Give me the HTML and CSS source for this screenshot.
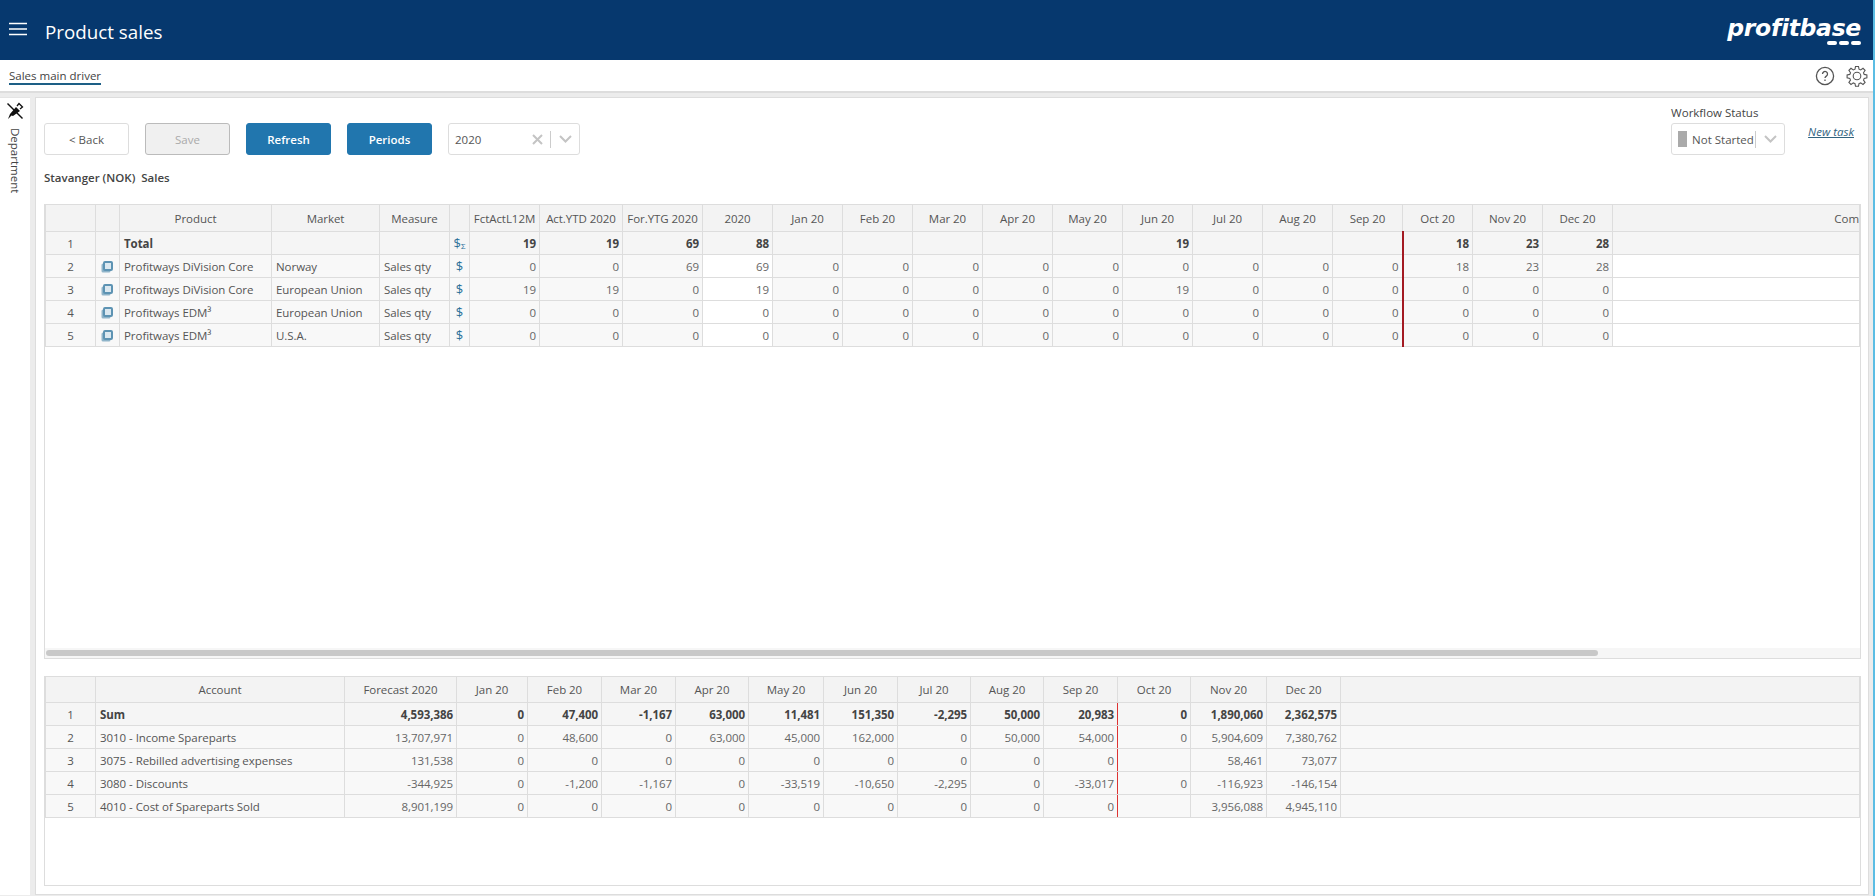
FILE: index.html
```html
<!DOCTYPE html>
<html lang="en">
<head>
    <meta charset="UTF-8">
    <title>Product sales</title>
    <link rel="stylesheet" href="styles.css">
</head>
<body>
    <header class="topbar">
        <svg class="menu-icon" width="18" height="14" viewBox="0 0 18 14"><path d="M0 1.500h18M0 7h18M0 12.500h18" stroke="#fff" stroke-width="1.500" fill="none"/></svg>
        <h1 class="page-title">Product sales</h1>
        <div class="logo">
            <span class="logo-text">profitbase</span>
            <span class="logo-dashes"><i></i><i></i><i></i></span>
        </div>
    </header>
    <nav class="subbar">
        <a class="tab-link">Sales main driver</a>
        <div class="subbar-icons">
            <svg width="20" height="20" viewBox="0 0 20 20" fill="none" stroke="#555" stroke-width="1.300"><circle cx="10" cy="10" r="8.600"/><path d="M7.500 8a2.500 2.500 0 1 1 3.800 2.100c-.9.600-1.300 1-1.300 2"/><path d="M10 13.600v1.400"/></svg>
            <svg width="22" height="22" viewBox="0 0 22 22" fill="none" stroke="#555" stroke-width="1.100"><path d="M9.500 1.500h3l.5 2.700 1.700.7 2.300-1.600 2.100 2.100-1.600 2.300.7 1.700 2.700.5v3l-2.700.5-.7 1.700 1.600 2.300-2.100 2.100-2.300-1.600-1.700.7-.5 2.700h-3l-.5-2.700-1.700-.7-2.300 1.600-2.100-2.100 1.600-2.300-.7-1.700-2.700-.5v-3l2.700-.5.7-1.700-1.600-2.300 2.100-2.100 2.300 1.600 1.700-.7z"/><circle cx="11" cy="11" r="3.800"/></svg>
        </div>
    </nav>
    <div class="workspace">
        <aside class="rail">
            <svg width="18" height="18" viewBox="0 0 18 18"><path d="M2 1l15 15-1 1L1 2z" fill="#111"/><path d="M4 12l6-7 4 4-7 5-1.500-.5L2 17z" fill="#111"/><path d="M11 4l2-2.500 3.500 3.500-2.500 2" fill="none" stroke="#111" stroke-width="1.300"/></svg>
            <span class="rail-label">Department</span>
        </aside>
        <main class="panel">
            <div class="toolbar">
                <button class="btn">&lt; Back</button>
                <button class="btn btn-disabled">Save</button>
                <button class="btn btn-primary">Refresh</button>
                <button class="btn btn-primary">Periods</button>
                <div class="select select-year">
                    <span class="select-value">2020</span>
                    <svg width="11" height="11" viewBox="0 0 11 11"><path d="M1 1l9 9M10 1l-9 9" stroke="#c4c4c4" stroke-width="2" fill="none"/></svg>
                    <span class="select-sep"></span>
                    <svg width="13" height="8" viewBox="0 0 13 8"><path d="M1 1l5.500 5.500L12 1" stroke="#c4c4c4" stroke-width="2" fill="none"/></svg>
                </div>
                <div class="workflow">
                    <label class="workflow-label">Workflow Status</label>
                    <div class="select select-status">
                        <span class="status-swatch"></span>
                        <span class="select-value">Not Started</span>
                        <span class="select-sep"></span>
                        <svg width="13" height="8" viewBox="0 0 13 8"><path d="M1 1l5.500 5.500L12 1" stroke="#c4c4c4" stroke-width="2" fill="none"/></svg>
                    </div>
                </div>
                <a class="new-task">New task</a>
            </div>
            <p class="context">Stavanger (NOK)&nbsp; Sales</p>

            <section class="grid-box grid-box-top">
                <div class="grid-scroll">
                    <table class="grid grid-products">
                        <colgroup>
                            <col class="w-51"><col class="w-24"><col class="w-152"><col class="w-108"><col class="w-70"><col class="w-20">
                            <col class="w-70"><col class="w-83"><col class="w-80"><col class="w-70">
                            <col class="w-70"><col class="w-70"><col class="w-70"><col class="w-70"><col class="w-70"><col class="w-70">
                            <col class="w-70"><col class="w-70"><col class="w-70"><col class="w-70"><col class="w-70"><col class="w-70">
                            <col>
                        </colgroup>
                        <thead>
                            <tr><th></th><th></th><th>Product</th><th>Market</th><th>Measure</th><th></th><th>FctActL12M</th><th>Act.YTD 2020</th><th>For.YTG 2020</th><th>2020</th><th>Jan 20</th><th>Feb 20</th><th>Mar 20</th><th>Apr 20</th><th>May 20</th><th>Jun 20</th><th>Jul 20</th><th>Aug 20</th><th>Sep 20</th><th>Oct 20</th><th>Nov 20</th><th>Dec 20</th><th class="th-clip">Com</th></tr>
                        </thead>
                        <tbody>
                            <tr class="total"><td class="idx">1</td><td></td><td>Total</td><td></td><td></td><td class="sym">$<sub>Σ</sub></td><td class="n">19</td><td class="n">19</td><td class="n">69</td><td class="n">88</td><td></td><td></td><td></td><td></td><td></td><td class="n">19</td><td></td><td></td><td class="now"></td><td class="n">18</td><td class="n">23</td><td class="n">28</td><td></td></tr>
                            <tr><td class="idx">2</td><td class="ico"><span class="copy-icon"></span></td><td>Profitways DiVision Core</td><td>Norway</td><td>Sales qty</td><td class="sym">$</td><td class="n">0</td><td class="n">0</td><td class="n">69</td><td class="n edit">69</td><td class="n">0</td><td class="n">0</td><td class="n">0</td><td class="n">0</td><td class="n">0</td><td class="n">0</td><td class="n">0</td><td class="n">0</td><td class="n now">0</td><td class="n">18</td><td class="n">23</td><td class="n">28</td><td class="edit"></td></tr>
                            <tr><td class="idx">3</td><td class="ico"><span class="copy-icon"></span></td><td>Profitways DiVision Core</td><td>European Union</td><td>Sales qty</td><td class="sym">$</td><td class="n">19</td><td class="n">19</td><td class="n">0</td><td class="n edit">19</td><td class="n">0</td><td class="n">0</td><td class="n">0</td><td class="n">0</td><td class="n">0</td><td class="n">19</td><td class="n">0</td><td class="n">0</td><td class="n now">0</td><td class="n">0</td><td class="n">0</td><td class="n">0</td><td class="edit"></td></tr>
                            <tr><td class="idx">4</td><td class="ico"><span class="copy-icon"></span></td><td>Profitways EDM³</td><td>European Union</td><td>Sales qty</td><td class="sym">$</td><td class="n">0</td><td class="n">0</td><td class="n">0</td><td class="n edit">0</td><td class="n">0</td><td class="n">0</td><td class="n">0</td><td class="n">0</td><td class="n">0</td><td class="n">0</td><td class="n">0</td><td class="n">0</td><td class="n now">0</td><td class="n">0</td><td class="n">0</td><td class="n">0</td><td class="edit"></td></tr>
                            <tr><td class="idx">5</td><td class="ico"><span class="copy-icon"></span></td><td>Profitways EDM³</td><td>U.S.A.</td><td>Sales qty</td><td class="sym">$</td><td class="n">0</td><td class="n">0</td><td class="n">0</td><td class="n edit">0</td><td class="n">0</td><td class="n">0</td><td class="n">0</td><td class="n">0</td><td class="n">0</td><td class="n">0</td><td class="n">0</td><td class="n">0</td><td class="n now">0</td><td class="n">0</td><td class="n">0</td><td class="n">0</td><td class="edit"></td></tr>
                        </tbody>
                    </table>
                </div>
                <div class="scroll-track"><div class="scroll-thumb"></div></div>
            </section>

            <section class="grid-box grid-box-bottom">
                <table class="grid grid-accounts">
                    <colgroup>
                        <col class="w-51"><col class="w-249"><col class="w-112"><col class="w-71"><col class="w-74"><col class="w-74"><col class="w-73"><col class="w-75"><col class="w-74"><col class="w-73"><col class="w-73"><col class="w-74"><col class="w-73"><col class="w-76"><col class="w-74">
                        <col>
                    </colgroup>
                    <thead>
                        <tr><th></th><th>Account</th><th>Forecast 2020</th><th>Jan 20</th><th>Feb 20</th><th>Mar 20</th><th>Apr 20</th><th>May 20</th><th>Jun 20</th><th>Jul 20</th><th>Aug 20</th><th>Sep 20</th><th>Oct 20</th><th>Nov 20</th><th>Dec 20</th><th></th></tr>
                    </thead>
                    <tbody>
                        <tr class="total"><td class="idx">1</td><td>Sum</td><td class="n">4,593,386</td><td class="n">0</td><td class="n">47,400</td><td class="n">-1,167</td><td class="n">63,000</td><td class="n">11,481</td><td class="n">151,350</td><td class="n">-2,295</td><td class="n">50,000</td><td class="n now">20,983</td><td class="n">0</td><td class="n">1,890,060</td><td class="n">2,362,575</td><td></td></tr>
                        <tr><td class="idx">2</td><td>3010 - Income Spareparts</td><td class="n">13,707,971</td><td class="n">0</td><td class="n">48,600</td><td class="n">0</td><td class="n">63,000</td><td class="n">45,000</td><td class="n">162,000</td><td class="n">0</td><td class="n">50,000</td><td class="n now">54,000</td><td class="n">0</td><td class="n">5,904,609</td><td class="n">7,380,762</td><td></td></tr>
                        <tr><td class="idx">3</td><td>3075 - Rebilled advertising expenses</td><td class="n">131,538</td><td class="n">0</td><td class="n">0</td><td class="n">0</td><td class="n">0</td><td class="n">0</td><td class="n">0</td><td class="n">0</td><td class="n">0</td><td class="n now">0</td><td class="n"></td><td class="n">58,461</td><td class="n">73,077</td><td></td></tr>
                        <tr><td class="idx">4</td><td>3080 - Discounts</td><td class="n">-344,925</td><td class="n">0</td><td class="n">-1,200</td><td class="n">-1,167</td><td class="n">0</td><td class="n">-33,519</td><td class="n">-10,650</td><td class="n">-2,295</td><td class="n">0</td><td class="n now">-33,017</td><td class="n">0</td><td class="n">-116,923</td><td class="n">-146,154</td><td></td></tr>
                        <tr><td class="idx">5</td><td>4010 - Cost of Spareparts Sold</td><td class="n">8,901,199</td><td class="n">0</td><td class="n">0</td><td class="n">0</td><td class="n">0</td><td class="n">0</td><td class="n">0</td><td class="n">0</td><td class="n">0</td><td class="n now">0</td><td class="n"></td><td class="n">3,956,088</td><td class="n">4,945,110</td><td></td></tr>
                    </tbody>
                </table>
            </section>
        </main>
    </div>
</body>
</html>
```

FILE: styles.css
```css
* {
    box-sizing: border-box;
}
body {
    margin: 0;
    height: 896px;
    overflow: hidden;
    display: flex;
    flex-direction: column;
    background: #ececec;
    color: #555;
    font-family: "Open Sans", sans-serif;
    font-size: 11.5px;
    border-right: 2px solid #5bbde4;
}

/* Top bar */
.topbar {
    height: 60px;
    flex: none;
    display: flex;
    align-items: center;
    padding: 0 12px 0 9px;
    background: #06386e;
    color: #fff;
}
.menu-icon {
    margin-top: -2px;
}
.page-title {
    margin: 3px 0 0 18px;
    font-size: 18.800px;
    font-weight: 400;
}
.logo {
    margin-left: auto;
    margin-top: 4px;
    display: flex;
    flex-direction: column;
    align-items: flex-end;
    height: 32px;
}
.logo-text {
    font-family: "DejaVu Sans", sans-serif;
    font-style: italic;
    font-weight: 700;
    font-size: 23.500px;
    line-height: 24px;
    letter-spacing: -.3px;
}
.logo-dashes {
    display: flex;
    gap: 2px;
    margin-top: 1px;
}
.logo-dashes i {
    width: 10px;
    height: 4px;
    border-radius: 2px;
    background: #fff;
}

/* Sub bar */
.subbar {
    height: 33px;
    flex: none;
    display: flex;
    align-items: center;
    justify-content: space-between;
    padding: 0 5px 0 9px;
    background: #fff;
    border-bottom: 2px solid #ddd;
}
.tab-link {
    margin-top: 2px;
    color: #444;
    font-size: 11.500px;
    line-height: 14px;
    border-bottom: 2px solid #1d5f86;
}
.subbar-icons {
    display: flex;
    align-items: center;
    gap: 11px;
}

/* Work area */
.workspace {
    flex: 1;
    min-height: 0;
    display: flex;
    gap: 5px;
    padding: 4px 4px 1px 0;
}
.rail {
    width: 30px;
    flex: none;
    display: flex;
    flex-direction: column;
    align-items: center;
    gap: 8px;
    padding-top: 4px;
    background: #fff;
    border-top: 1px solid #e4e4e4;
}
.rail-label {
    writing-mode: vertical-rl;
    color: #444;
    font-size: 11.500px;
}
.panel {
    flex: 1;
    min-width: 0;
    display: flex;
    flex-direction: column;
    padding: 7px 7px 8px 8px;
    background: #fff;
    border: 1px solid #ddd;
}

/* Toolbar */
.toolbar {
    display: flex;
    align-items: flex-end;
    flex: none;
}
.btn {
    width: 85px;
    height: 32px;
    margin-right: 16px;
    padding: 0;
    border: 1px solid #ddd;
    border-radius: 3px;
    background: #fff;
    color: #555;
    font-family: inherit;
    font-size: 11.500px;
}
.btn-disabled {
    background: #f0f0f0;
    border-color: #bbb;
    color: #aaa;
}
.btn-primary {
    background: #2176ae;
    border-color: #2176ae;
    color: #fff;
    font-weight: 600;
}
.select {
    height: 32px;
    display: flex;
    align-items: center;
    border: 1px solid #ddd;
    border-radius: 3px;
    background: #fff;
}
.select-year {
    width: 132px;
    padding: 0 7px 0 6px;
}
.select-value {
    flex: 1;
}
.select-sep {
    width: 1px;
    height: 17px;
    margin: 0 8px 0 7px;
    background: #ccc;
}
.workflow {
    margin-left: auto;
    width: 114px;
}
.workflow-label {
    display: block;
    margin-bottom: 3px;
    color: #444;
    font-size: 11.500px;
}
.select-status {
    padding-left: 6px;
    padding-right: 7px;
}
.status-swatch {
    width: 9px;
    height: 16px;
    margin-right: 5px;
    background: #aaa;
}
.select-status .select-sep {
    margin-left: 0;
}
.new-task {
    align-self: flex-end;
    margin: 0 7px 16px 23px;
    color: #31637f;
    font-size: 11.500px;
    font-style: italic;
    text-decoration: underline;
}
.context {
    flex: none;
    margin: 15px 0 0;
    height: 34px;
    color: #444;
    font-weight: 600;
    font-size: 11.500px;
}

/* Data grids */
.grid-box {
    border: 1px solid #ddd;
    border-top: 0;
    background: #fff;
    overflow: hidden;
}
.grid-box-top {
    height: 455px;
    flex: none;
    display: flex;
    flex-direction: column;
}
.grid-box-bottom {
    flex: 1;
    margin-top: 17px;
}
.grid-scroll {
    flex: 1;
    min-height: 0;
    overflow: hidden;
}
.scroll-track {
    height: 10px;
    flex: none;
    padding: 2px 1px;
    background: #f6f6f6;
}
.scroll-thumb {
    width: 1552px;
    height: 6px;
    border-radius: 3px;
    background: #c8c8c8;
}
.grid {
    width: 100%;
    table-layout: fixed;
    border-collapse: collapse;
    white-space: nowrap;
    letter-spacing: -.05px;
}
.w-20 { width: 20px; }
.w-24 { width: 24px; }
.w-51 { width: 50px; }
.w-70 { width: 70px; }
.w-71 { width: 71px; }
.w-73 { width: 73px; }
.w-74 { width: 74px; }
.w-75 { width: 75px; }
.w-76 { width: 76px; }
.w-80 { width: 80px; }
.w-83 { width: 83px; }
.w-108 { width: 108px; }
.w-112 { width: 112px; }
.w-152 { width: 152px; }
.w-249 { width: 249px; }
.grid th {
    height: 27px;
    padding: 0;
    background: #f3f3f3;
    border: 1px solid #ddd;
    font-weight: 400;
    overflow: hidden;
}
.grid-accounts th {
    height: 26px;
}
.grid .th-clip {
    text-align: right;
}
.grid td {
    height: 23px;
    padding: 0 3px 0 4px;
    background: #f8f8f8;
    border: 1px solid #ddd;
    overflow: hidden;
}
.grid .idx {
    padding: 0;
    text-align: center;
}
.grid .n {
    text-align: right;
    color: #666;
}
.grid .ico,
.grid .sym {
    padding: 0;
    text-align: center;
}
.grid .sym {
    color: #2a7099;
    font-size: 13px;
}
.grid .sym sub {
    font-size: 8px;
    vertical-align: -1px;
}
.grid .edit {
    background: #fff;
}
.grid .now {
    border-right: 2px solid #a31a22;
}
.grid .total td {
    background: #f5f5f5;
    color: #444;
    font-weight: 700;
}
.grid .total .sym {
    color: #2a7099;
    font-weight: 400;
}
.grid .total .idx {
    font-weight: 400;
    color: #555;
}
.grid-accounts .now {
    border-right: 1px solid #d33;
}
.copy-icon {
    display: inline-block;
    position: relative;
    width: 10px;
    height: 10px;
    margin-top: 1px;
    border: 2px solid #5d93b3;
    border-radius: 2px;
    background: #dbe8f0;
    box-shadow: -2px 2px 0 -0.500px #8fb4c9;
}
```
